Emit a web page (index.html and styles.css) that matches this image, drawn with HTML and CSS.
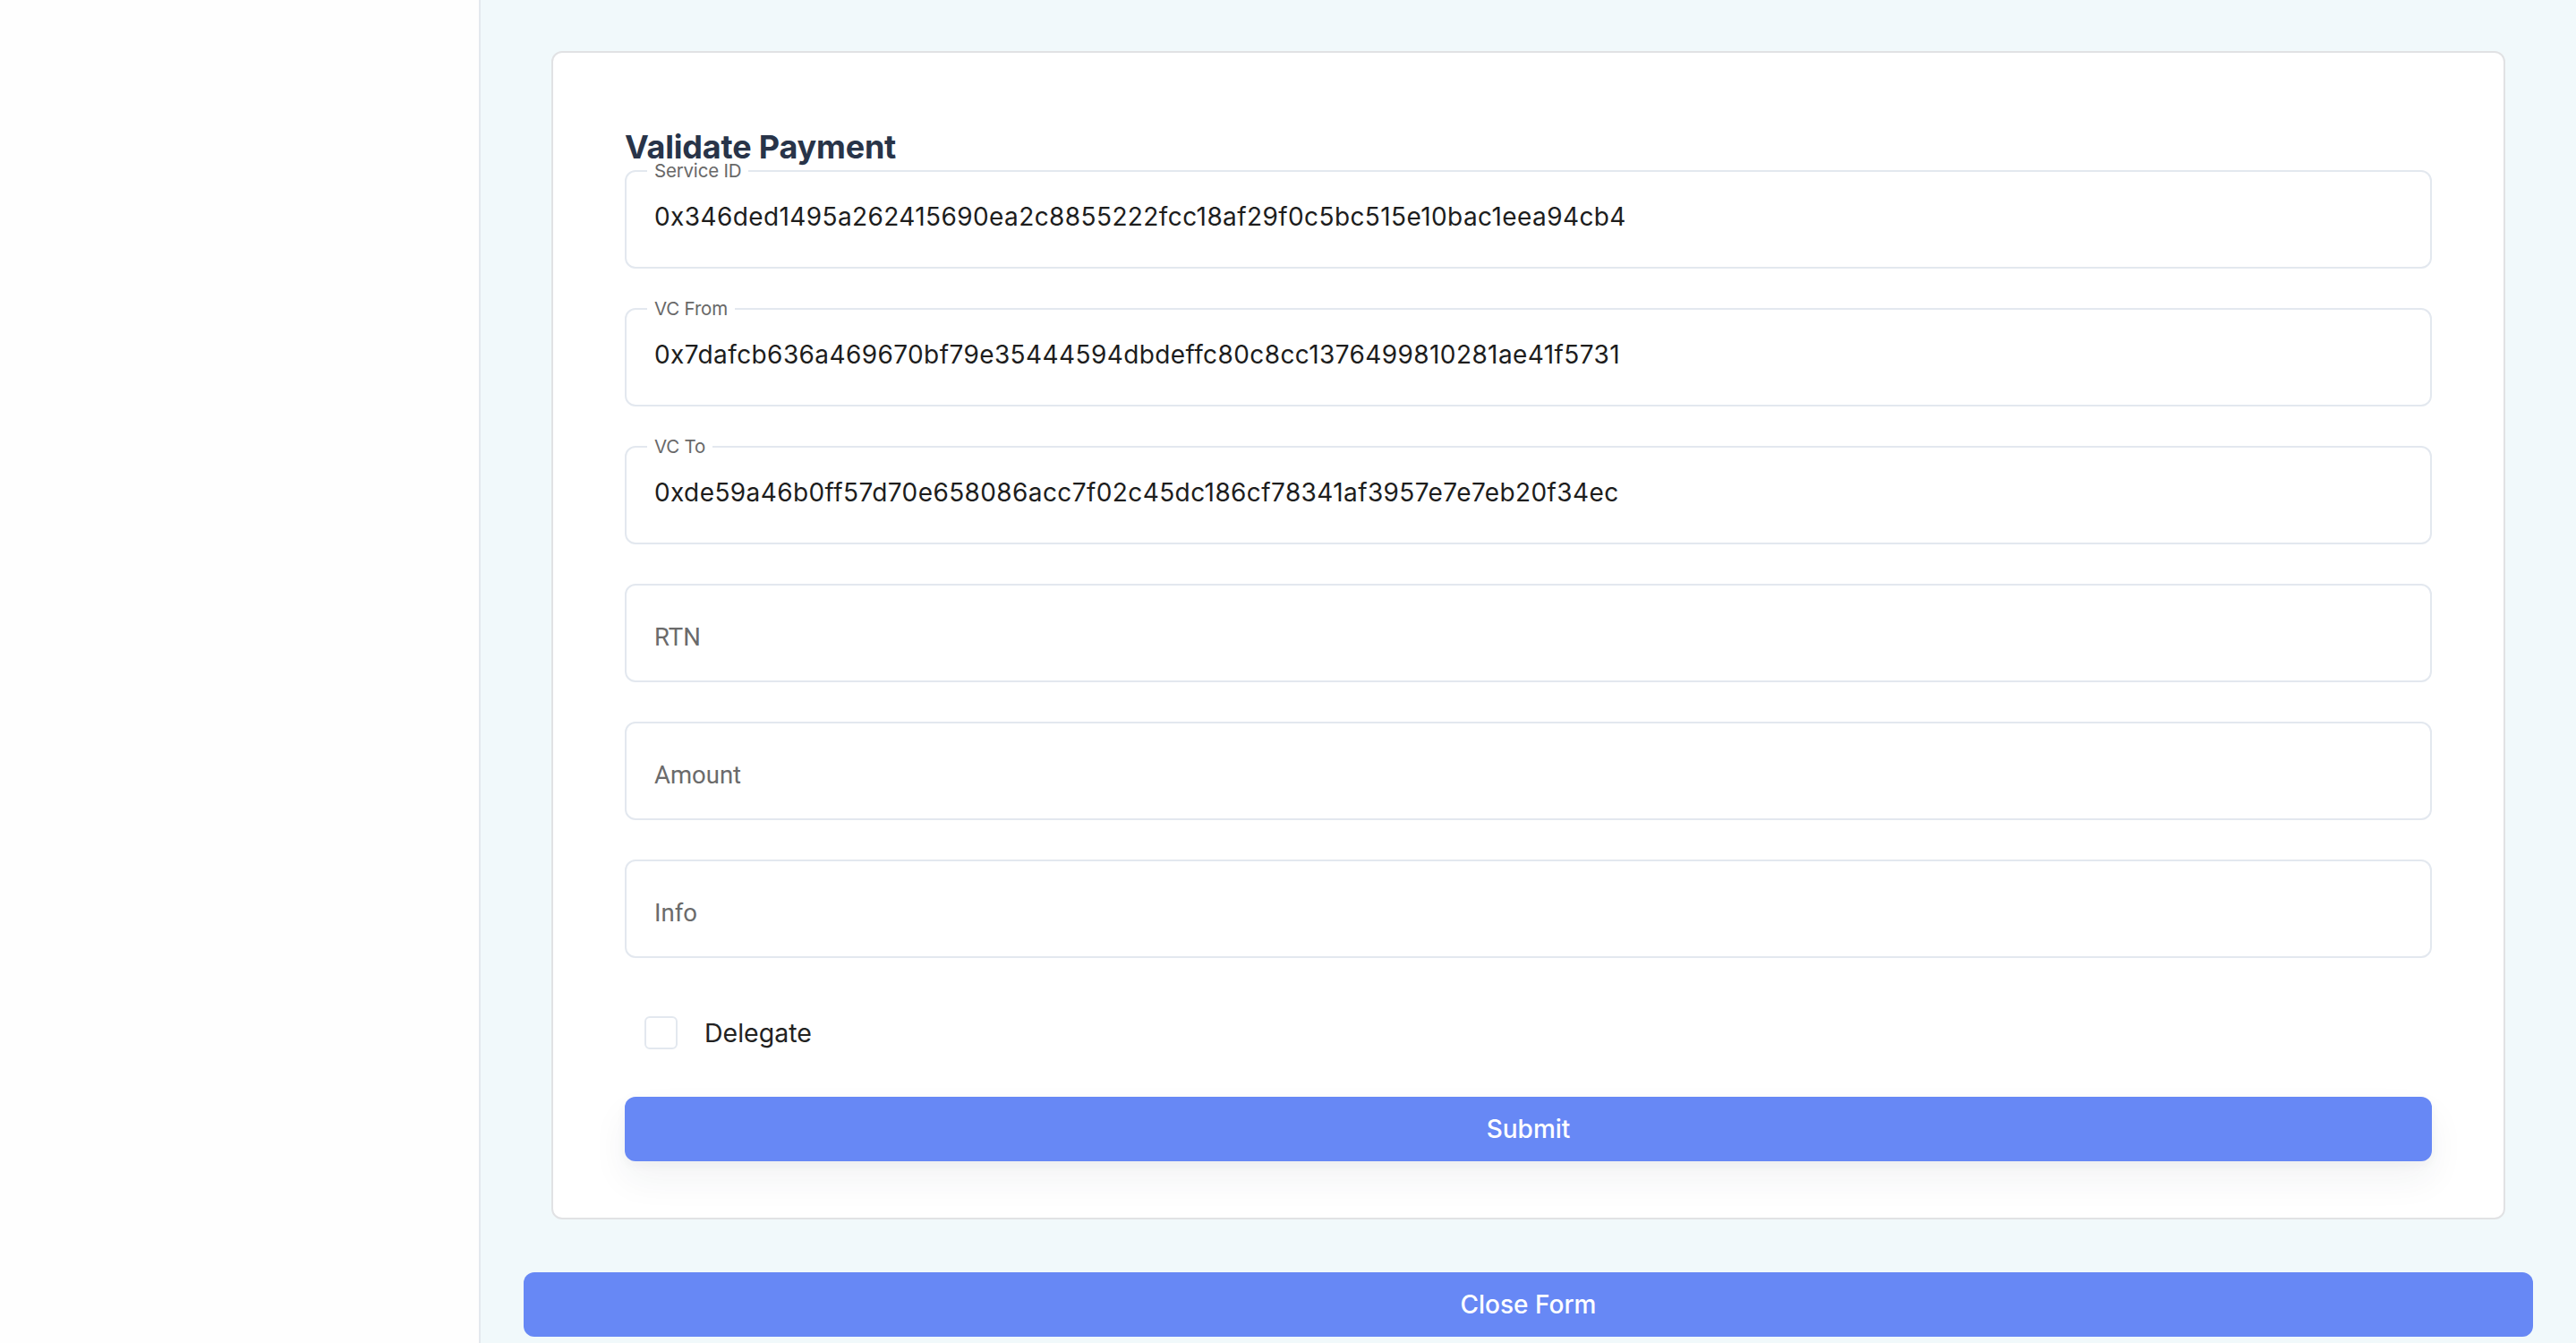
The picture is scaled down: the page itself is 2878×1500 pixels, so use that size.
FILE: index.html
```html
<!DOCTYPE html>
<html lang="en">
<head>
<meta charset="utf-8">
<title>Validate Payment</title>
<link rel="stylesheet" href="styles.css">
</head>
<body>
<div class="layout">
  <aside class="sidebar"></aside>
  <main class="main">
    <section class="card">
      <h2 class="card-title">Validate Payment</h2>
      <form class="form">
        <div class="field">
          <span class="field-label">Service ID</span>
          <span class="field-value">0x346ded1495a262415690ea2c8855222fcc18af29f0c5bc515e10bac1eea94cb4</span>
        </div>
        <div class="field">
          <span class="field-label">VC From</span>
          <span class="field-value">0x7dafcb636a469670bf79e35444594dbdeffc80c8cc1376499810281ae41f5731</span>
        </div>
        <div class="field">
          <span class="field-label">VC To</span>
          <span class="field-value">0xde59a46b0ff57d70e658086acc7f02c45dc186cf78341af3957e7e7eb20f34ec</span>
        </div>
        <div class="field">
          <span class="field-placeholder">RTN</span>
        </div>
        <div class="field">
          <span class="field-placeholder">Amount</span>
        </div>
        <div class="field">
          <span class="field-placeholder">Info</span>
        </div>
        <label class="check-row">
          <span class="checkbox"></span>
          <span class="check-text">Delegate</span>
        </label>
        <button type="button" class="btn btn-submit">Submit</button>
      </form>
    </section>
    <button type="button" class="btn btn-close">Close Form</button>
  </main>
</div>
</body>
</html>
```

FILE: styles.css
```css
* { box-sizing: border-box; }

html, body {
  margin: 0;
  padding: 0;
  height: 1500px;
  overflow: hidden;
}

body {
  font-family: Inter, "Noto Sans", sans-serif;
  background: #f1f9fb;
}

.layout {
  display: flex;
  height: 1500px;
}

.sidebar {
  width: 537px;
  flex: 0 0 537px;
  background: #fefefe;
  border-right: 2px solid #e3e8ee;
}

.main {
  flex: 1;
  background: #f1f9fb;
  padding: 57px 48px 7px;
  display: flex;
  flex-direction: column;
}

.card {
  margin: 0 31px;
  background: #ffffff;
  border: 2px solid #e1e2e4;
  border-radius: 12px;
  padding: 83px 80px 63px;
}

.card-title {
  margin: 0 0 4px;
  font-size: 36px;
  line-height: 44px;
  font-weight: 700;
  color: #283449;
  letter-spacing: -0.2px;
}

.form {
  display: flex;
  flex-direction: column;
  gap: 44px;
}

.field {
  position: relative;
  height: 110px;
  border: 2px solid #e3e8ef;
  border-radius: 12px;
  padding: 0 31px;
  display: flex;
  align-items: center;
}

.field-label {
  position: absolute;
  top: -14px;
  left: 23px;
  padding: 0 8px;
  background: #ffffff;
  font-size: 20.5px;
  line-height: 25px;
  color: #686868;
  letter-spacing: -0.2px;
}

.field-value {
  font-size: 28px;
  line-height: 34px;
  color: #1d1d1d;
  padding-bottom: 6px;
  white-space: nowrap;
  letter-spacing: 0.4px;
}

.field-placeholder {
  font-family: Roboto, "Liberation Sans", sans-serif;
  font-size: 27.5px;
  line-height: 32px;
  color: #6b6b6b;
  padding-top: 10px;
}

.check-row {
  display: flex;
  align-items: center;
  gap: 30px;
  padding: 21px 0 9px 22px;
  cursor: pointer;
}

.checkbox {
  width: 37px;
  height: 37px;
  border: 2px solid #e3e8ef;
  border-radius: 6px;
  background: #ffffff;
}

.check-text {
  font-size: 28.5px;
  line-height: 37px;
  color: #222222;
}

.btn {
  display: block;
  width: 100%;
  height: 72px;
  border: none;
  border-radius: 12px;
  background: #6788f5;
  color: #ffffff;
  font-family: Inter, "Noto Sans", sans-serif;
  font-size: 28px;
  font-weight: 500;
  cursor: pointer;
}

.btn-submit {
  box-shadow: 0 20px 40px rgba(40, 50, 70, 0.06), 0 4px 12px rgba(40, 50, 70, 0.04);
}

.btn-close {
  margin-top: 59px;
  flex: 0 0 72px;
}
```
